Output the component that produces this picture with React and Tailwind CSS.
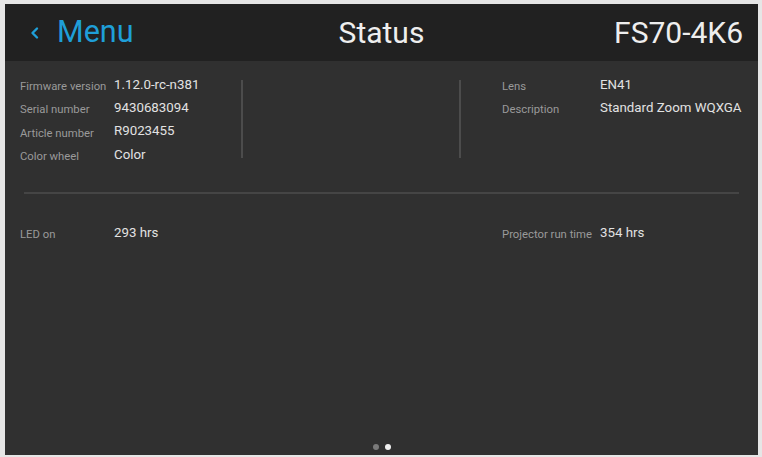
import React from "react";

const font = { fontFamily: "Roboto, 'Noto Sans', Arial, sans-serif" };

function Row({ label, value, labelW }) {
  return (
    <div className="flex h-[23.3px] items-center">
      <div className={`${labelW} shrink-0 translate-y-[2px] text-[11.3px] text-[#9a9a9a] whitespace-nowrap`}>
        {label}
      </div>
      <div className="-translate-y-[1px] text-[13.3px] text-[#e2e2e2] whitespace-nowrap">{value}</div>
    </div>
  );
}

export default function App() {
  return (
    <div
      className="w-[762px] h-[457px] bg-[#e6e6e6] pt-[4px] pl-[5px] pr-[4px] pb-[2px]"
      style={font}
    >
      <div className="flex h-full flex-col bg-[#303030]">
        {/* title bar */}
        <div className="relative flex h-[57px] shrink-0 items-center bg-[#212121] pl-[24px] pr-[15px]">
          <div className="flex items-center gap-[16px] text-[#1f9fd8]">
            <svg width="12" height="14" viewBox="0 0 12 14">
              <polyline
                points="8,2.5 3.5,7 8,11.5"
                fill="none"
                stroke="#1f9fd8"
                strokeWidth="2.4"
                strokeLinecap="round"
                strokeLinejoin="round"
              />
            </svg>
            <span className="text-[30.5px] leading-none">Menu</span>
          </div>
          <div className="absolute left-1/2 -translate-x-1/2 text-[30px] leading-none text-[#eeeeee]">
            Status
          </div>
          <div className="ml-auto text-[30px] leading-none text-[#eeeeee]">FS70-4K6</div>
        </div>

        {/* info blocks */}
        <div className="flex items-start pl-[15px] pt-[13px]">
          <div className="w-[221px] shrink-0">
            <Row labelW="w-[94px]" label="Firmware version" value="1.12.0-rc-n381" />
            <Row labelW="w-[94px]" label="Serial number" value="9430683094" />
            <Row labelW="w-[94px]" label="Article number" value="R9023455" />
            <Row labelW="w-[94px]" label="Color wheel" value="Color" />
          </div>
          <div className="mt-[6px] h-[78px] w-[2px] shrink-0 bg-[#4c4c4c]" />
          <div className="w-[216px] shrink-0" />
          <div className="mt-[6px] h-[78px] w-[2px] shrink-0 bg-[#4c4c4c]" />
          <div className="pl-[41px]">
            <Row labelW="w-[98px]" label="Lens" value="EN41" />
            <Row labelW="w-[98px]" label="Description" value="Standard Zoom WQXGA" />
          </div>
        </div>

        <div className="mx-[19px] mt-[25px] h-[2px] bg-[#454545]" />

        {/* counters */}
        <div className="mt-[28px] flex pl-[15px]">
          <div className="w-[482px] shrink-0">
            <Row labelW="w-[94px]" label="LED on" value="293 hrs" />
          </div>
          <Row labelW="w-[98px]" label="Projector run time" value="354 hrs" />
        </div>

        <div className="flex-1" />

        {/* page indicator */}
        <div className="flex justify-center gap-[6px] pb-[5px]">
          <div className="h-[6px] w-[6px] rounded-full bg-[#7a7a7a]" />
          <div className="h-[6px] w-[6px] rounded-full bg-[#f0f0f0]" />
        </div>
      </div>
    </div>
  );
}
